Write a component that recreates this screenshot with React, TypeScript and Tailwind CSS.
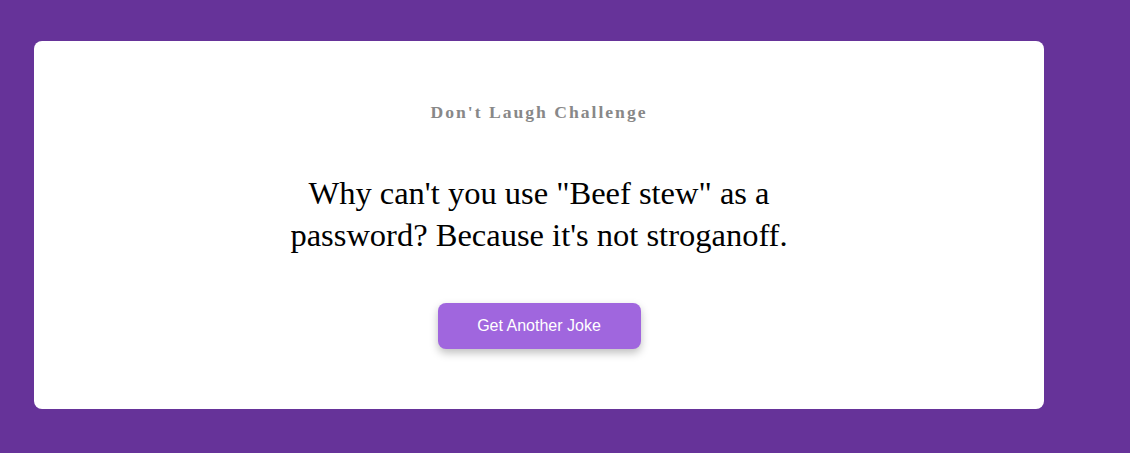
export default function App() {
  return (
    <div className="min-h-[453px] w-full bg-[#663399] pt-[41px] pb-[44px] pl-[34px]">
      <div className="flex w-[1010px] flex-col items-center rounded-[8px] bg-white pt-[60px] pb-[60px]">
        <h1 className="font-['Liberation_Serif','Times_New_Roman',serif] text-[17.6px] leading-[22px] font-bold tracking-[2px] text-[#888888]">
          Don't Laugh Challenge
        </h1>
        <p className="mt-[49px] max-w-[520px] text-center font-['Liberation_Serif','Times_New_Roman',serif] text-[32.5px] leading-[42px] text-black">
          Why can't you use "Beef stew" as a password? Because it's not stroganoff.
        </p>
        <button className="mt-[47px] flex h-[46px] w-[203px] items-center justify-center rounded-[8px] bg-[#a066de] font-['Liberation_Sans',Arial,sans-serif] text-[16px] text-white shadow-[0_4px_8px_rgba(0,0,0,0.25)]">
          Get Another Joke
        </button>
      </div>
    </div>
  );
}
